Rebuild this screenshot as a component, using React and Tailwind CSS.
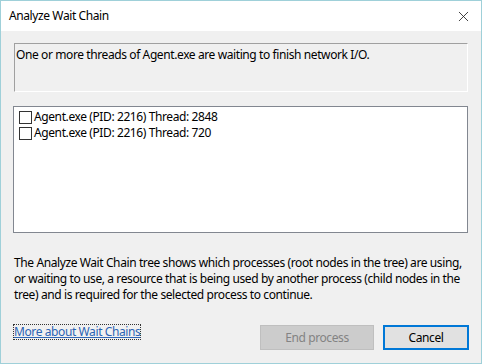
import { X } from 'lucide-react';

function CheckRow({ label }) {
  return (
    <div className="flex items-center h-[16px]">
      <span className="w-[13px] h-[13px] border border-[#333333] bg-white mr-[2px]" />
      <span>{label}</span>
    </div>
  );
}

export default function App() {
  return (
    <div className="w-[482px] h-[364px] bg-[#f0f0f0] border border-[#9fd0d9] flex flex-col text-[12px] tracking-[-0.4px] text-black font-['Noto_Sans','Segoe_UI',sans-serif] leading-[16px]">
      {/* title bar */}
      <div className="h-[30px] bg-white flex items-center justify-between pl-[8px] pr-[9px] shrink-0">
        <span className="text-[12px]">Analyze Wait Chain</span>
        <X className="w-[17px] h-[17px] text-[#222222]" strokeWidth={1.2} />
      </div>

      <div className="flex flex-col px-[12px] pt-[12px] grow">
        {/* status box */}
        <div className="h-[49px] ml-[1px] mr-[1px] border-t border-l border-[#a0a0a0] border-b-white border-r-white border-b border-r px-[1px] pt-[3px]">
          One or more threads of Agent.exe are waiting to finish network I/O.
        </div>

        {/* thread list */}
        <div className="mt-[14px] h-[127px] mr-[1px] bg-white border border-[#828790] pl-[5px] pt-[2px]">
          <CheckRow label="Agent.exe (PID: 2216) Thread: 2848" />
          <CheckRow label="Agent.exe (PID: 2216) Thread: 720" />
        </div>

        <p className="mt-[22px] ml-[1px] leading-[16px] whitespace-nowrap">
          The Analyze Wait Chain tree shows which processes (root nodes in the tree) are using,<br />
          or waiting to use, a resource that is being used by another process (child nodes in the<br />
          tree) and is required for the selected process to continue.
        </p>

        <div className="mt-auto mb-[13px] flex items-center">
          <a className="self-start mt-[-1px] text-[#2c64b4] underline border border-dotted border-[#333333] leading-[14px]">
            More about Wait Chains
          </a>
          <div className="ml-auto flex gap-[9px]">
            <button className="w-[114px] h-[25px] bg-[#cccccc] border border-[#bfbfbf] text-[#838383]">
              End process
            </button>
            <button className="w-[86px] h-[25px] bg-[#e1e1e1] border-2 border-[#0078d7] text-black">
              Cancel
            </button>
          </div>
        </div>
      </div>
    </div>
  );
}
